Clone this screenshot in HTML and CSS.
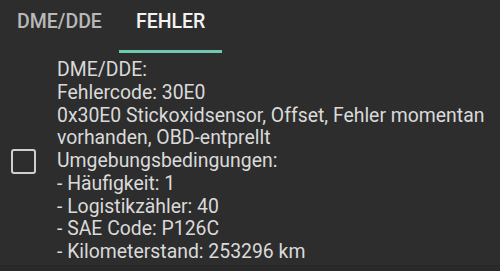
FILE: index.html
```html
<!DOCTYPE html>
<html>
<head>
<meta charset="utf-8">
<link rel="stylesheet" href="styles.css">
</head>
<body>
<div class="app">
  <div class="tabs">
    <div class="tab">DME/DDE</div>
    <div class="tab active">FEHLER</div>
  </div>
  <div class="row">
    <div class="check"><span class="box"></span></div>
    <div class="text">DME/DDE:<br>Fehlercode: 30E0<br>0x30E0 Stickoxidsensor, Offset, Fehler momentan vorhanden, OBD-entprellt<br>Umgebungsbedingungen:<br>- Häufigkeit: 1<br>- Logistikzähler: 40<br>- SAE Code: P126C<br>- Kilometerstand: 253296 km</div>
  </div>
  <div class="next"></div>
</div>
</body>
</html>
```
FILE: styles.css
```css
html, body { margin: 0; padding: 0; background: #2d2d2d; }
.app { width: 500px; height: 271px; overflow: hidden; background: #2d2d2d; }
.tabs { display: flex; height: 53px; }
.tab {
  font-family: Roboto, sans-serif;
  font-weight: 500;
  font-size: 19.5px;
  color: #b8b8b8;
  padding: 10px 17px 0;
  height: 43px;
  line-height: 24px;
  box-sizing: content-box;
}
.tab.active {
  color: #f2f2f2;
  border-bottom: 3px solid #6fc8b0;
  height: 40px;
}
.row { display: flex; align-items: center; border-bottom: 1px solid #262626; padding: 6px 0 1px; }
.check { width: 57px; flex: none; display: flex; padding-left: 11px; padding-top: 1px; box-sizing: border-box; }
.box { width: 21px; height: 21px; border: 2px solid #cfcfcf; border-radius: 3px; }
.text {
  font-family: Roboto, sans-serif;
  font-size: 19.4px;
  line-height: 22.75px;
  color: #dadada;
  width: 440px;
}
.next { height: 20px; background: #2a2a2a; }
```
